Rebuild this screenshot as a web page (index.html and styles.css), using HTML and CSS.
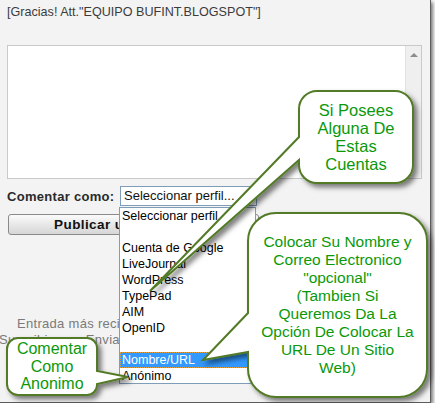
FILE: index.html
```html
<!DOCTYPE html>
<html lang="es">
<head>
<meta charset="utf-8">
<title>Comentar como</title>
<link rel="stylesheet" href="styles.css">
</head>
<body>
<div class="frame">
  <p class="thanks">[Gracias! Att."EQUIPO BUFINT.BLOGSPOT"]</p>
  <div class="textarea">
    <div class="ta-body"></div>
    <div class="scrollbar"><span class="arrow-up"></span></div>
  </div>
  <div class="comment-row">
    <span class="label">Comentar como:</span>
    <div class="select">Seleccionar perfil...</div>
  </div>
  <div class="button">Publicar un comentario</div>
  <p class="nav">Entrada más reciente&nbsp;&nbsp;&nbsp;Página principal</p>
  <p class="subscribe">Suscribirse a: Enviar comentarios (Atom)</p>

  <ul class="dropdown">
    <li>Seleccionar perfil</li>
    <li class="blank"></li>
    <li>Cuenta de Google</li>
    <li>LiveJournal</li>
    <li>WordPress</li>
    <li>TypePad</li>
    <li>AIM</li>
    <li>OpenID</li>
    <li class="blank"></li>
    <li class="selected">Nombre/URL</li>
    <li>Anónimo</li>
  </ul>

  <svg class="callouts" width="435" height="408" viewBox="0 0 435 408" xmlns="http://www.w3.org/2000/svg">
    <defs>
      <filter id="sh" x="-20%" y="-20%" width="140%" height="140%">
        <feDropShadow dx="3.5" dy="3.5" stdDeviation="2.5" flood-color="#000" flood-opacity="0.5"/>
      </filter>
    </defs>
    <g fill="#fff" stroke="#527a26" stroke-width="2" stroke-linejoin="miter" filter="url(#sh)">
      <path d="M317 91 H395 A18 18 0 0 1 413 109 V165 A18 18 0 0 1 395 183 H317 A18 18 0 0 1 299 165 V160 L150 291 L299 137 V109 A18 18 0 0 1 317 91 Z"/>
      <path d="M276 213 H399 A28 28 0 0 1 427 241 V369 A28 28 0 0 1 399 397 H276 A28 28 0 0 1 248 369 V352 L203 360 L248 313 V241 A28 28 0 0 1 276 213 Z"/>
      <path d="M18 338 H87 A10 10 0 0 1 97 348 V371 L128 377 L97 384 V385 A10 10 0 0 1 87 395 H18 A11 11 0 0 1 7 384 V349 A11 11 0 0 1 18 338 Z"/>
    </g>
  </svg>

  <div class="bubble-text b1">Si Posees<br>Alguna De<br>Estas<br>Cuentas</div>
  <div class="bubble-text b2">Colocar Su Nombre y<br>Correo Electronico<br>"opcional"<br>(Tambien Si<br>Queremos Da La<br>Opción De Colocar La<br>URL De Un Sitio<br>Web)</div>
  <div class="bubble-text b3">Comentar<br>Como<br>Anonimo</div>
</div>
</body>
</html>
```

FILE: styles.css
```css
html, body {
  margin: 0;
  padding: 0;
  background: #ffffff;
}

.frame {
  position: relative;
  box-sizing: border-box;
  width: 431px;
  height: 403px;
  padding: 4px 0 0 7px;
  background: #f3f3f3;
  border-right: 1px solid #5c5c5c;
  border-bottom: 1px solid #5c5c5c;
  box-shadow: 2px 2px 4px rgba(0, 0, 0, 0.55);
  font-family: "Liberation Sans", Arial, sans-serif;
  color: #3a3a3a;
  overflow: visible;
}

.thanks {
  margin: 0;
  font-size: 12.6px;
  line-height: 16px;
  color: #3c3c3c;
}

.textarea {
  box-sizing: border-box;
  margin-top: 25px;
  width: 415px;
  height: 134px;
  border: 1px solid #c9c9c9;
  background: #ffffff;
  display: flex;
}

.ta-body {
  flex: 1;
}

.scrollbar {
  width: 16px;
  background: #efefef;
  border-left: 1px solid #e2e2e2;
  display: flex;
  justify-content: center;
  padding-top: 7px;
  box-sizing: border-box;
}

.arrow-up {
  width: 0;
  height: 0;
  border-left: 4px solid transparent;
  border-right: 4px solid transparent;
  border-bottom: 4px solid #8c8c8c;
}

.comment-row {
  display: flex;
  align-items: center;
  margin-top: 7px;
  height: 20px;
}

.label {
  width: 113px;
  font-weight: bold;
  font-size: 13px;
  letter-spacing: 0.3px;
  color: #2a2a2a;
  white-space: nowrap;
}

.select {
  box-sizing: border-box;
  width: 137px;
  height: 20px;
  border: 1px solid #7f9db9;
  background: #ffffff;
  font-size: 13px;
  line-height: 18px;
  padding-left: 3px;
  color: #111;
}

.button {
  box-sizing: border-box;
  margin: 8px 0 0 1px;
  width: 251px;
  height: 21px;
  border: 1px solid #8a8a8a;
  border-radius: 3px;
  background: linear-gradient(#fbfbfb, #e4e4e4 60%, #d6d6d6);
  font-weight: bold;
  font-size: 13.5px;
  letter-spacing: 0.4px;
  line-height: 19px;
  text-align: center;
  color: #111;
  white-space: nowrap;
}

.nav {
  margin: 81px 0 0 10px;
  font-size: 13px;
  letter-spacing: 0.3px;
  line-height: 16px;
  color: #7a7a7a;
  white-space: nowrap;
}

.subscribe {
  margin: 0 0 0 -8px;
  font-size: 13px;
  letter-spacing: 0.3px;
  line-height: 16px;
  color: #7a7a7a;
  white-space: nowrap;
}

.dropdown {
  position: absolute;
  left: 119px;
  top: 207px;
  box-sizing: border-box;
  width: 137px;
  height: 177px;
  margin: 0;
  padding: 0;
  list-style: none;
  background: #ffffff;
  border: 1px solid #7f9db9;
  font-size: 12.5px;
  color: #000;
}

.dropdown li {
  height: 16px;
  line-height: 16px;
  padding-left: 2px;
  white-space: nowrap;
}

.dropdown li.selected {
  background: #3399ff;
  color: #ffffff;
  outline: 1px dotted #e0a040;
  outline-offset: -1px;
}

.callouts {
  position: absolute;
  left: 0;
  top: 0;
  overflow: visible;
  pointer-events: none;
}

.bubble-text {
  position: absolute;
  display: flex;
  align-items: center;
  justify-content: center;
  text-align: center;
  color: #0b990b;
  font-family: "Liberation Sans", Arial, sans-serif;
  white-space: nowrap;
}

.b1 {
  left: 299px;
  top: 91px;
  width: 114px;
  height: 92px;
  font-size: 16.5px;
  line-height: 18px;
}

.b2 {
  left: 248px;
  top: 213px;
  width: 179px;
  height: 184px;
  font-size: 15.5px;
  line-height: 18px;
}

.b3 {
  left: 7px;
  top: 338px;
  width: 90px;
  height: 57px;
  font-size: 16px;
  line-height: 17.5px;
}
```
